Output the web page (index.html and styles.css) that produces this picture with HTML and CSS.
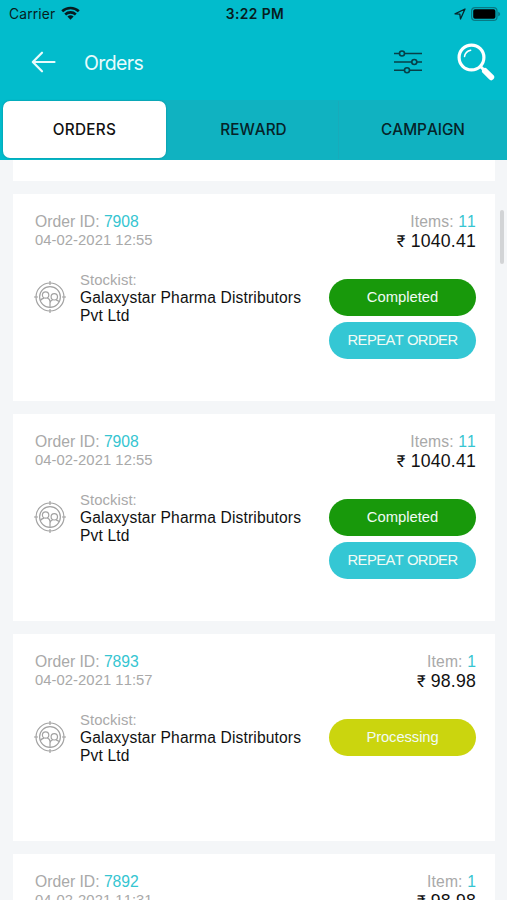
FILE: index.html
```html
<!DOCTYPE html>
<html lang="en">
<head>
<meta charset="utf-8">
<title>Orders</title>
<link rel="stylesheet" href="styles.css">
</head>
<body>
<svg class="defs" width="0" height="0" aria-hidden="true">
  <symbol id="stockist" viewBox="0 0 32 32">
    <g fill="none" stroke="#a2a2a2" stroke-width="1.2">
      <circle cx="16" cy="16" r="14"/>
      <circle cx="16" cy="16" r="10.4"/>
      <path d="M16 0v4M16 28v4M0 16h4M28 16h4"/>
      <circle cx="11.6" cy="14" r="3.2"/>
      <circle cx="20.300" cy="15.800" r="3.200"/>
      <path d="M6.300 19.800c.8-1.800 2-2.300 3.700-2.700M13.300 17c1.900.7 2.700 1.600 2.700 3.400v6M16 22c.4-1.900 1.200-2.700 2.700-3.200M22 18.800c1.500.4 2.400.900 3 1.900"/>
    </g>
  </symbol>
</svg>
<div class="screen">
  <header class="top">
    <div class="status">
      <div class="carrier"><span>Carrier</span>
        <svg width="19" height="14" viewBox="0 0 19 14"><g fill="none" stroke="#071c20" stroke-width="2.600"><path d="M1.200 5.300a12 12 0 0 1 16.600 0"/><path d="M4.200 8.500a7.700 7.700 0 0 1 10.600 0"/></g><path d="M6.400 10.600a4.500 4.500 0 0 1 6.200 0L9.500 13.700z" fill="#071c20"/></svg>
      </div>
      <div class="clock">3:22 PM</div>
      <div class="power">
        <svg width="12" height="12" viewBox="0 0 12 12"><path d="M1 5.800 11 1 6.500 11 5.800 6.200z" fill="none" stroke="#07262b" stroke-width="1.300" stroke-linejoin="round"/></svg>
        <svg width="30" height="14" viewBox="0 0 30 14"><rect x=".6" y=".6" width="25.400" height="12.800" rx="3.500" fill="none" stroke="#087984" stroke-width="1.200"/><rect x="2.200" y="2.200" width="22.200" height="9.600" rx="1.800" fill="#000"/><path d="M27.200 4.700c2.600 1 2.600 3.600 0 4.600z" fill="#087984"/></svg>
      </div>
    </div>
    <div class="bar">
      <svg class="back" width="26" height="22" viewBox="0 0 26 22"><path d="M11 1.700 1.800 11l9.200 9.300M2 11h21.500" fill="none" stroke="#e9fbfc" stroke-width="2.200" stroke-linecap="round" stroke-linejoin="round"/></svg>
      <h1>Orders</h1>
      <svg class="filter" width="30" height="24" viewBox="0 0 30 24"><g fill="none" stroke="#073f47" stroke-width="1.600"><path d="M1 3.500h5.500M11.500 3.500H29M1 12h17.800M23.800 12H29M1 20.300h10.500M16.500 20.300H29"/><circle cx="9" cy="3.500" r="2.500"/><circle cx="21.300" cy="12" r="2.500"/><circle cx="14" cy="20.300" r="2.500"/></g></svg>
      <svg class="search" width="40" height="40" viewBox="0 0 40 40"><g fill="none" stroke="#fff" stroke-linecap="round"><circle cx="15.500" cy="15.500" r="12.400" stroke-width="3.200"/><path d="M8.500 14.500c.6-3.500 2.600-5.600 6.200-6.300" stroke-width="1.500"/><path d="m25 25 3 3" stroke-width="3"/><path d="m29 29 6.200 6.200" stroke-width="6"/></g></svg>
    </div>
    <nav class="tabs">
      <a class="tab active">ORDERS</a>
      <a class="tab">REWARD</a>
      <a class="tab">CAMPAIGN</a>
    </nav>
  </header>
  <main class="list">
    <div class="card stub"></div>
    <article class="card">
      <div class="row head"><div><p class="id">Order ID: <b>7908</b></p><p class="date">04-02-2021 12:55</p></div><div class="sum"><p class="id">Items: <b>11</b></p><p class="price"><span class="rupee">₹</span> 1040.41</p></div></div>
      <div class="row body"><svg class="who" width="32" height="32"><use href="#stockist"/></svg><div class="name"><p class="label">Stockist:</p><p>Galaxystar Pharma Distributors<br>Pvt Ltd</p></div><div class="acts"><span class="pill done">Completed</span><span class="pill repeat">REPEAT ORDER</span></div></div>
    </article>
    <article class="card">
      <div class="row head"><div><p class="id">Order ID: <b>7908</b></p><p class="date">04-02-2021 12:55</p></div><div class="sum"><p class="id">Items: <b>11</b></p><p class="price"><span class="rupee">₹</span> 1040.41</p></div></div>
      <div class="row body"><svg class="who" width="32" height="32"><use href="#stockist"/></svg><div class="name"><p class="label">Stockist:</p><p>Galaxystar Pharma Distributors<br>Pvt Ltd</p></div><div class="acts"><span class="pill done">Completed</span><span class="pill repeat">REPEAT ORDER</span></div></div>
    </article>
    <article class="card">
      <div class="row head"><div><p class="id">Order ID: <b>7893</b></p><p class="date">04-02-2021 11:57</p></div><div class="sum"><p class="id">Item: <b>1</b></p><p class="price"><span class="rupee">₹</span> 98.98</p></div></div>
      <div class="row body"><svg class="who" width="32" height="32"><use href="#stockist"/></svg><div class="name"><p class="label">Stockist:</p><p>Galaxystar Pharma Distributors<br>Pvt Ltd</p></div><div class="acts"><span class="pill processing">Processing</span></div></div>
    </article>
    <article class="card">
      <div class="row head"><div><p class="id">Order ID: <b>7892</b></p><p class="date">04-02-2021 11:31</p></div><div class="sum"><p class="id">Item: <b>1</b></p><p class="price"><span class="rupee">₹</span> 98.98</p></div></div>
    </article>
    <div class="thumb"></div>
  </main>
</div>
</body>
</html>
```

FILE: styles.css
```css
* { box-sizing: border-box; }
body { margin: 0; font-family: "Liberation Sans", Arial, sans-serif; font-kerning: none; }
p, h1 { margin: 0; font-weight: 400; }
b { font-weight: 400; color: #35c5d1; }
.defs { position: absolute; }
.screen { height: 900px; overflow: hidden; display: flex; flex-direction: column; background: #f4f6f8; }

.top { flex: none; height: 160px; background: #02bccc; font-family: Inter, sans-serif; }
.status { height: 28px; padding: 0 6px 0 9px; display: grid; grid-template-columns: 1fr auto 1fr; align-items: center; font-size: 13.5px; color: #071c20; }
.carrier, .power { display: flex; align-items: center; gap: 5px; }
.carrier { font-size: 13.800px; letter-spacing: .25px; }
.carrier svg { margin-top: -2px; }
.power { justify-content: flex-end; gap: 5px; }
.clock { font-size: 13.800px; font-weight: 600; letter-spacing: .4px; }
.bar { height: 72px; padding-left: 31px; display: flex; align-items: center; }
.back { margin-top: -4px; }
h1 { margin: -3px auto 0 27px; font-size: 19.500px; letter-spacing: -.7px; color: #e9fbfc; }
.filter { margin: -5px 33px 0 0; }
.search { margin: -4px 11px 0 0; }
.tabs { height: 60px; padding: 1px 0; display: grid; grid-template-columns: repeat(3, 1fr); background: linear-gradient(90deg, #02bccc 0, #10b2c1 170px); }
.tab { padding-bottom: 1px; display: flex; align-items: center; justify-content: center; font-size: 15.300px; font-weight: 500; color: #062328; }
.tab + .tab + .tab { border-left: 1px solid #18abbb; }
.active { margin: 0 3px 1px; padding-bottom: 0; background: #fff; border-radius: 7px; color: #111; box-shadow: 0 0 2px #078796; letter-spacing: .3px; }

.list { position: relative; flex: 1; padding: 0 12px 0 13px; display: flex; flex-direction: column; gap: 13px; }
.card { flex: none; height: 207px; padding: 19px 19px 0 22px; background: #fff; }
.stub { height: 21px; padding: 0; }
.row { display: flex; }
.head { justify-content: space-between; }
.id, .date, .label { color: #a9a9a9; }
.id { font-size: 15.700px; letter-spacing: 0; line-height: 18px; }
.date { font-size: 14.800px; letter-spacing: .05px; line-height: 18px; }
.sum { text-align: right; }
.sum .id { letter-spacing: .15px; }
.price { font-size: 17.700px; letter-spacing: .2px; line-height: 20px; color: #111; }
.rupee { font-family: Roboto, "Noto Sans", sans-serif; font-size: 16.500px; }
.body { margin-top: 19px; font-size: 15.600px; letter-spacing: .15px; line-height: 18.300px; color: #111; }
.who { flex: none; margin: 10px 14px 0 -1px; }
.label { font-size: 14.800px; letter-spacing: .1px; line-height: 18px; }
.name { flex: 1; white-space: nowrap; }
.acts { width: 147px; margin-top: 8px; display: flex; flex-direction: column; gap: 6px; }
.pill { height: 37px; border-radius: 19px; display: flex; align-items: center; justify-content: center; font-size: 14.800px; letter-spacing: 0; color: #f1fbf5; }
.done { background: #18990b; }
.repeat { background: #34c7d4; letter-spacing: -.55px; }
.processing { background: #cbd50e; letter-spacing: -.1px; }
.thumb { position: absolute; top: 50px; right: 3px; width: 4px; height: 54px; border-radius: 2px; background: #d2d4d6; }
```
